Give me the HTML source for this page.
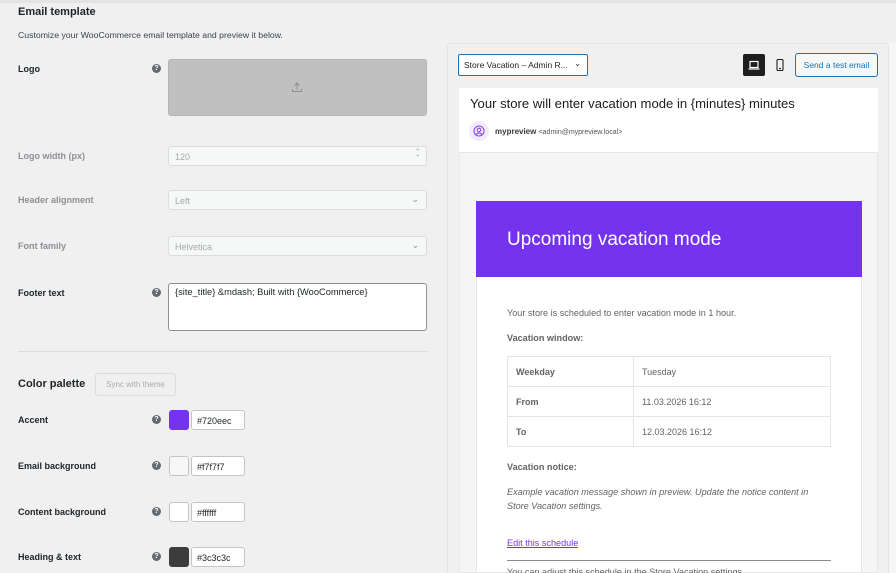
<!DOCTYPE html>
<html style="overflow:hidden"><head><style>
*{box-sizing:border-box;margin:0;padding:0}
html,body{width:896px;height:573px;overflow:hidden}
body{background:#f0f0f1;font-family:"Liberation Sans",sans-serif;color:#1d2327;position:relative}
.a{position:absolute}
.lbl{position:absolute;left:18px;font-size:9px;font-weight:bold;color:#1d2327}
.dim{color:#8c8f94;font-weight:bold}
.q{position:absolute;left:152px;width:9px;height:9px;border-radius:50%;background:#646970;color:#fff;font-size:7px;font-weight:bold;text-align:center;line-height:9px}
.inp{position:absolute;left:168px;width:259px;height:20px;border:1px solid #dcdcde;border-radius:3px;background:#f6f7f7;font-size:9px;color:#a7aaad;padding:5px 6px}
.sw{position:absolute;left:169px;width:20px;height:20px;border:1px solid #c3c4c7;border-radius:3px}
.hx{position:absolute;left:191px;width:54px;height:20px;border:1px solid #c3c4c7;border-radius:3px;background:#fff;font-size:9px;padding:5px 5px;color:#1d2327}
td{border:1px solid #e5e5e5;font-size:9px;color:#636363;padding:0 8px;height:30px}
</style></head><body>
<div class="a" style="left:0;top:0;width:896px;height:3px;background:#e4e4e4"></div>
<div class="a" style="left:18px;top:6px;font-size:11px;font-weight:bold">Email template</div>
<div class="a" style="left:18px;top:30px;font-size:8.7px;color:#3c434a">Customize your WooCommerce email template and preview it below.</div>

<div class="lbl" style="top:64px">Logo</div><div class="q" style="top:64px">?</div>
<div class="a" style="left:168px;top:59px;width:259px;height:57px;background:#c0c0c0;border:1px solid #b5b5b5;border-radius:3px"></div>
<svg class="a" style="left:291px;top:81px" width="12" height="12" viewBox="0 0 12 12" fill="none" stroke="#8c8f94" stroke-width="1"><path d="M6 9V2M3.5 4.5L6 2l2.5 2.5M1.5 8v2.5h9V8"/></svg>

<div class="lbl dim" style="top:151px">Logo width (px)</div>
<div class="inp" style="top:146px">120<span style="position:absolute;right:7px;top:3px;font-size:8px;line-height:6px;color:#8c8f94">ˆ<br>ˇ</span></div>
<div class="lbl dim" style="top:195px">Header alignment</div>
<div class="inp" style="top:190px">Left<span style="position:absolute;right:7px;top:3px;font-size:9px;color:#8c8f94">⌄</span></div>
<div class="lbl dim" style="top:241px">Font family</div>
<div class="inp" style="top:236px">Helvetica<span style="position:absolute;right:7px;top:3px;font-size:9px;color:#8c8f94">⌄</span></div>

<div class="lbl" style="top:288px">Footer text</div><div class="q" style="top:288px">?</div>
<div class="a" style="left:168px;top:283px;width:259px;height:48px;background:#fff;border:1px solid #8c8f94;border-radius:3px;font-size:9.3px;padding:3px 6px">{site_title} &amp;mdash; Built with {WooCommerce}</div>

<div class="a" style="left:18px;top:351px;width:409px;height:1px;background:#dcdcde"></div>
<div class="a" style="left:18px;top:378px;font-size:11px;font-weight:bold">Color palette</div>
<div class="a" style="left:95px;top:373px;width:81px;height:23px;border:1px solid #dcdcde;border-radius:3px;background:#f0f0f1;font-size:8px;color:#a7aaad;text-align:center;line-height:21px">Sync with theme</div>

<div class="lbl" style="top:415px">Accent</div><div class="q" style="top:415px">?</div>
<div class="sw" style="top:410px;background:#7433ec;border-color:#7433ec"></div><div class="hx" style="top:410px">#720eec</div>
<div class="lbl" style="top:461px">Email background</div><div class="q" style="top:461px">?</div>
<div class="sw" style="top:456px;background:#f7f7f7"></div><div class="hx" style="top:456px">#f7f7f7</div>
<div class="lbl" style="top:507px">Content background</div><div class="q" style="top:507px">?</div>
<div class="sw" style="top:502px;background:#fff"></div><div class="hx" style="top:502px">#ffffff</div>
<div class="lbl" style="top:552px">Heading &amp; text</div><div class="q" style="top:552px">?</div>
<div class="sw" style="top:547px;background:#3c3c3c;border-color:#3c3c3c"></div><div class="hx" style="top:547px">#3c3c3c</div>

<!-- preview panel -->
<div class="a" style="left:447px;top:43px;width:442px;height:540px;border:1px solid #e4e4e4;border-radius:3px;background:#f0f0f1"></div>
<div class="a" style="left:889px;top:43px;width:7px;height:530px;background:#f6f6f6"></div>
<div class="a" style="left:458px;top:54px;width:130px;height:22px;border:1px solid #2271b1;border-radius:2px;background:#fff;font-size:8.5px;padding:5px 5px;color:#1d2327">Store Vacation – Admin R...<span style="position:absolute;right:6px;top:4px;font-size:8px">⌄</span></div>
<div class="a" style="left:743px;top:54px;width:22px;height:22px;background:#1e1e1e;border-radius:2px"></div>
<svg class="a" style="left:748px;top:59px" width="12" height="12" viewBox="0 0 12 12" fill="none" stroke="#fff" stroke-width="1.2"><rect x="2" y="2.5" width="8" height="6"/><path d="M0.5 10h11"/></svg>
<svg class="a" style="left:775px;top:58px" width="10" height="14" viewBox="0 0 10 14" fill="none" stroke="#1e1e1e" stroke-width="1.1"><rect x="2" y="1.5" width="6" height="11" rx="1"/><path d="M4 10.5h2"/></svg>
<div class="a" style="left:795px;top:53px;width:83px;height:24px;border:1px solid #2271b1;border-radius:3px;background:#f6f7f7;font-size:8.5px;color:#2271b1;text-align:center;line-height:22px">Send a test email</div>

<div class="a" style="left:459px;top:88px;width:419px;height:485px;background:#f5f5f5;border:1px solid #e8e8e8"></div>
<div class="a" style="left:459px;top:88px;width:419px;height:65px;background:#fff;border-bottom:1px solid #e5e5e5"></div>
<div class="a" style="left:470px;top:96px;font-size:13.1px;color:#1e1e1e">Your store will enter vacation mode in {minutes} minutes</div>
<div class="a" style="left:469px;top:121px;width:20px;height:20px;border-radius:50%;background:#f1ebfd"></div>
<svg class="a" style="left:473px;top:125px" width="12" height="12" viewBox="0 0 12 12" fill="none" stroke="#8a4be8" stroke-width="1.1"><circle cx="6" cy="6" r="5"/><circle cx="6" cy="5" r="1.8"/><path d="M3 9.5c1.5-2 4.5-2 6 0"/></svg>
<div class="a" style="left:495px;top:127px;font-size:8px;font-weight:bold;color:#3c3c3c">mypreview <span style="font-weight:normal;font-size:7px;color:#555">&lt;admin@mypreview.local&gt;</span></div>

<div class="a" style="left:476px;top:201px;width:386px;height:372px;background:#fff;border:1px solid #e5e5e5"></div>
<div class="a" style="left:476px;top:201px;width:386px;height:76px;background:#7433ec"></div>
<div class="a" style="left:507px;top:229px;font-size:19px;color:#fff">Upcoming vacation mode</div>
<div class="a" style="left:507px;top:308px;font-size:9.1px;color:#636363">Your store is scheduled to enter vacation mode in 1 hour.</div>
<div class="a" style="left:507px;top:333px;font-size:9.1px;font-weight:bold;color:#636363">Vacation window:</div>
<table class="a" style="left:507px;top:356px;width:324px;border-collapse:collapse">
<tr><td style="width:126px;font-weight:bold">Weekday</td><td>Tuesday</td></tr>
<tr><td style="font-weight:bold">From</td><td>11.03.2026 16:12</td></tr>
<tr><td style="font-weight:bold">To</td><td>12.03.2026 16:12</td></tr>
</table>
<div class="a" style="left:507px;top:462px;font-size:9.1px;font-weight:bold;color:#636363">Vacation notice:</div>
<div class="a" style="left:507px;top:486px;width:322px;font-size:9.1px;font-style:italic;color:#636363;line-height:13.5px">Example vacation message shown in preview. Update the notice content in Store Vacation settings.</div>
<div class="a" style="left:507px;top:538px;font-size:9.1px;color:#7433ec;text-decoration:underline">Edit this schedule</div>
<div class="a" style="left:507px;top:560px;width:324px;height:1px;background:#8c8c8c"></div>
<div class="a" style="left:507px;top:567px;font-size:9.1px;color:#636363">You can adjust this schedule in the Store Vacation settings.</div>
</body></html>
